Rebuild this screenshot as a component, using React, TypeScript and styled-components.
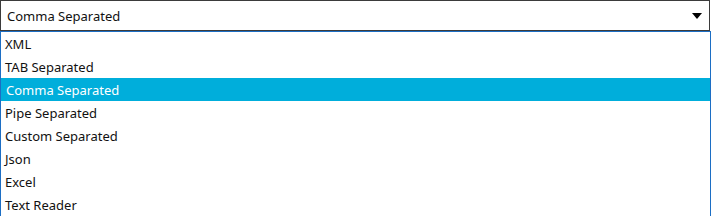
import React from "react";
import styled, { createGlobalStyle } from "styled-components";

const Global = createGlobalStyle`
  html, body { margin: 0; padding: 0; background: #ffffff; }
  body { font-family: "Noto Sans", "Open Sans", sans-serif; overflow: hidden; }
`;

const Wrapper = styled.div`
  width: 711px;
  height: 216px;
  display: flex;
  flex-direction: column;
  overflow: hidden;
`;

const Combo = styled.div`
  box-sizing: border-box;
  width: 710px;
  height: 31px;
  border: 1px solid #3b3b3b;
  display: flex;
  align-items: center;
  justify-content: space-between;
  padding: 0 7px 0 6px;
  font-size: 13px;
  color: #111;
`;

const Arrow = styled.span`
  width: 0;
  height: 0;
  border-left: 5px solid transparent;
  border-right: 5px solid transparent;
  border-top: 6px solid #000;
  margin-top: 1px;
`;

const Popup = styled.ul`
  box-sizing: border-box;
  list-style: none;
  margin: 0;
  padding: 0;
  width: 711px;
  flex: 1;
  border: 1px solid #1c6ec4;
  border-bottom: none;
`;

const Item = styled.li<{ $selected?: boolean }>`
  height: 23px;
  display: flex;
  align-items: center;
  padding-left: ${(p) => (p.$selected ? "5px" : "4px")};
  font-size: 13px;
  color: ${(p) => (p.$selected ? "#ffffff" : "#111")};
  background: ${(p) => (p.$selected ? "#00aedb" : "transparent")};
`;

const items = [
  "XML",
  "TAB Separated",
  "Comma Separated",
  "Pipe Separated",
  "Custom Separated",
  "Json",
  "Excel",
  "Text Reader",
];

export default function App() {
  const selected = "Comma Separated";
  return (
    <Wrapper>
      <Global />
      <Combo>
        <span>{selected}</span>
        <Arrow />
      </Combo>
      <Popup>
        {items.map((it) => (
          <Item key={it} $selected={it === selected}>
            {it}
          </Item>
        ))}
      </Popup>
    </Wrapper>
  );
}
